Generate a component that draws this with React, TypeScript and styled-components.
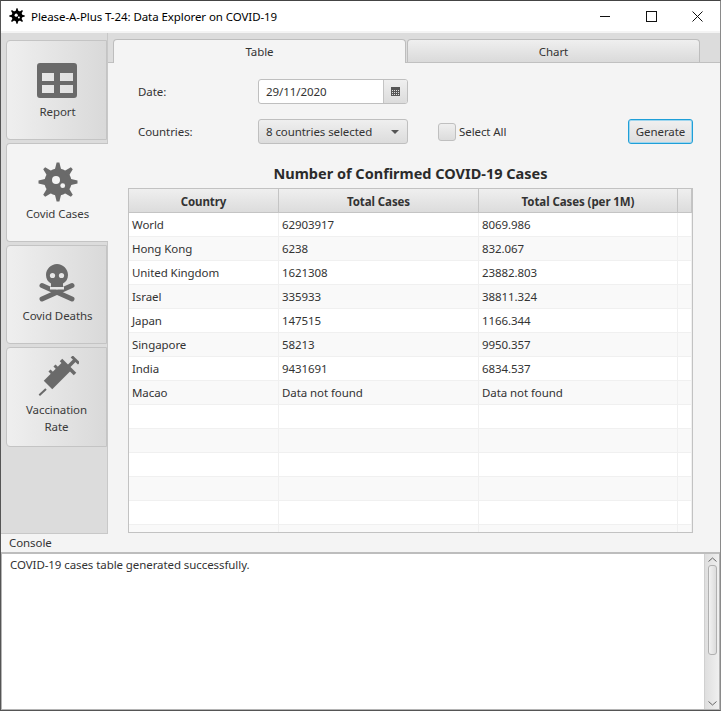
import styled, { createGlobalStyle } from "styled-components";

const GlobalStyle = createGlobalStyle`
    html, body {
        margin: 0;
        padding: 0;
        background: #f4f4f4;
    }
    * {
        box-sizing: border-box;
    }
`;

const FONT = `"Noto Sans", "Open Sans", "Liberation Sans", sans-serif`;

const Window = styled.div`
    width: 721px;
    height: 711px;
    display: flex;
    flex-direction: column;
    overflow: hidden;
    background: #f4f4f4;
    color: #333;
    font-family: ${FONT};
    font-size: 11.5px;
    letter-spacing: -0.08px;
    border: 1px solid #555;
    border-right-color: #8a8a8a;
    border-top-color: #444;
`;

const TitleBar = styled.header`
    height: 30px;
    flex: none;
    display: flex;
    align-items: center;
    padding-left: 8px;
    background: #fff;
    color: #000;
`;

const TitleText = styled.span`
    margin-left: 6px;
    flex: 1;
`;

const WindowButton = styled.span`
    width: 46px;
    height: 30px;
    display: flex;
    align-items: center;
    justify-content: center;
`;

const Body = styled.div`
    flex: 1;
    min-height: 0;
    display: flex;
    margin-top: 2px;
`;

const Sidebar = styled.nav`
    width: 107px;
    flex: none;
    display: flex;
    flex-direction: column;
    gap: 3px;
    padding: 7px 0 0 5px;
    background: #dcdcdc;
    border-right: 1px solid #c8c8c8;
    border-bottom: 1px solid #c8c8c8;
`;

const SideTab = styled.div<{ $active?: boolean; $height: number; $pad: number }>`
    height: ${(p) => p.$height}px;
    flex: none;
    display: flex;
    flex-direction: column;
    align-items: center;
    border: 1px solid #c4c4c4;
    border-right: ${(p) => (p.$active ? "none" : "1px solid #c4c4c4")};
    border-radius: 4px 0 0 4px;
    background: ${(p) => (p.$active ? "#f4f4f4" : "linear-gradient(90deg, #efefef, #d9d9d9)")};
    padding-top: ${(p) => p.$pad}px;
    width: ${(p) => (p.$active ? "102px" : "101px")};
`;

const SideLabel = styled.span<{ $gap: number; $nudge?: number; $wrapped?: boolean }>`
    margin-top: ${(p) => p.$gap}px;
    margin-left: ${(p) => (p.$nudge ?? 0) * 2}px;
    text-align: center;
    line-height: ${(p) => (p.$wrapped ? "17px" : "16px")};
    color: #3a3a3a;
    white-space: pre-line;
`;

const Main = styled.main`
    flex: 1;
    min-width: 0;
    display: flex;
    flex-direction: column;
`;

const TabHeader = styled.div`
    height: 30px;
    flex: none;
    display: flex;
    gap: 1px;
    padding: 6px 20px 0 5px;
    background: #dcdcdc;
    border-bottom: 1px solid #c0c0c0;
`;

const TopTab = styled.div<{ $active?: boolean }>`
    width: 293px;
    height: ${(p) => (p.$active ? "24px" : "23px")};
    display: flex;
    align-items: center;
    justify-content: center;
    border: 1px solid #bdbdbd;
    border-bottom: none;
    border-radius: 4px 4px 0 0;
    background: ${(p) => (p.$active ? "#f4f4f4" : "linear-gradient(#efefef, #dadada)")};
    z-index: 1;
`;

const Content = styled.section`
    flex: 1;
    min-height: 0;
    display: flex;
    flex-direction: column;
    padding: 16px 27px 1px 20px;
`;

const FormRow = styled.div`
    height: 25px;
    flex: none;
    display: flex;
    align-items: center;
    padding-left: 10px;
    margin-bottom: 15px;
`;

const FieldLabel = styled.label`
    width: 120px;
    flex: none;
`;

const DatePicker = styled.div`
    width: 150px;
    height: 25px;
    display: flex;
    border: 1px solid #bfbfbf;
    border-radius: 3px;
    background: #fff;
    overflow: hidden;
`;

const DateValue = styled.span`
    flex: 1;
    padding-left: 7px;
    line-height: 23px;
`;

const CalendarButton = styled.span`
    width: 24px;
    display: flex;
    align-items: center;
    justify-content: center;
    border-left: 1px solid #c4c4c4;
    background: linear-gradient(#efefef, #dcdcdc);
`;

const Combo = styled.div`
    width: 150px;
    height: 25px;
    display: flex;
    align-items: center;
    justify-content: space-between;
    padding: 0 8px 0 7px;
    border: 1px solid #bfbfbf;
    border-radius: 3px;
    background: linear-gradient(#efefef, #dcdcdc);
`;

const Arrow = styled.span`
    width: 0;
    height: 0;
    border-left: 4px solid transparent;
    border-right: 4px solid transparent;
    border-top: 4px solid #555;
`;

const CheckBox = styled.span`
    width: 18px;
    height: 18px;
    margin-left: 30px;
    border: 1px solid #bfbfbf;
    border-radius: 3px;
    background: linear-gradient(#efefef, #dcdcdc);
`;

const CheckLabel = styled.span`
    margin-left: 3px;
`;

const GenerateButton = styled.button`
    width: 65px;
    height: 25px;
    margin-left: auto;
    padding: 0;
    font: inherit;
    letter-spacing: inherit;
    color: #333;
    border: 1px solid #1f9fd8;
    border-radius: 3px;
    background: linear-gradient(#f0f0f0, #dedede);
    box-shadow: 0 0 0 1px #9fd6ee inset;
`;

const TableTitle = styled.h2`
    height: 22px;
    flex: none;
    margin: 3px 0 4px;
    text-align: center;
    font-size: 14.5px;
    line-height: 22px;
    font-weight: 700;
    letter-spacing: 0;
    color: #2b2b2b;
`;

const Table = styled.div`
    flex: 1;
    min-height: 0;
    overflow: hidden;
    border: 1px solid #c2c2c2;
    background: #fff;
`;

const Row = styled.div<{ $alt?: boolean }>`
    height: 24px;
    display: grid;
    grid-template-columns: 150px 200px 199px 14px;
    background: ${(p) => (p.$alt ? "#f9f9f9" : "#fff")};
    border-bottom: 1px solid #f0f0f0;
`;

const Cell = styled.div`
    padding-left: 3px;
    line-height: 23px;
    border-right: 1px solid #f0f0f0;
    white-space: nowrap;
`;

const HeaderRow = styled(Row)`
    background: linear-gradient(#efefef, #dcdcdc);
    border-bottom: 1px solid #c4c4c4;
`;

const HeaderCell = styled.div`
    text-align: center;
    font-weight: 700;
    line-height: 25px;
    border-right: 1px solid #c4c4c4;
    color: #333;
`;

const ConsoleLabel = styled.div`
    height: 18px;
    flex: none;
    padding-left: 8px;
    line-height: 18px;
`;

const ConsoleBox = styled.div`
    height: 158px;
    flex: none;
    display: flex;
    border: 1px solid #b4b4b4;
    border-top: 2px solid #bdbdbd;
    background: #fff;
`;

const ConsoleText = styled.div`
    flex: 1;
    padding: 3px 8px;
    line-height: 16px;
`;

const ScrollBar = styled.div`
    width: 15px;
    flex: none;
    display: flex;
    flex-direction: column;
    align-items: center;
    border-left: 1px solid #d0d0d0;
    background: linear-gradient(90deg, #dedede, #f0f0f0);
`;

const ScrollArrow = styled.span`
    height: 11px;
    flex: none;
    display: flex;
    align-items: center;
    justify-content: center;
`;

const ScrollThumb = styled.span`
    width: 9px;
    height: 90px;
    flex: none;
    border: 1px solid #b0b0b0;
    border-radius: 3px;
    background: linear-gradient(90deg, #f2f2f2, #dcdcdc);
`;

const ScrollSpacer = styled.span`
    flex: 1;
`;

const ICON = "#6a6a6a";

const Gear = ({ size, color, bg }: { size: number; color: string; bg: string }) => (
    <svg width={size} height={size} viewBox="0 0 40 40">
        <circle cx="20" cy="20" r="13.5" fill={color} />
        {[0, 45, 90, 135, 180, 225, 270, 315].map((a) => (
            <polygon key={a} points="16.5,9 18.6,0.5 21.4,0.5 23.5,9" fill={color} transform={`rotate(${a} 20 20)`} />
        ))}
        <circle cx="18" cy="18" r="4" fill={bg} />
        <circle cx="24.7" cy="23.7" r="2.4" fill={bg} />
    </svg>
);

const ReportIcon = () => (
    <svg width="40" height="35" viewBox="0 0 40 35">
        <path
            fillRule="evenodd"
            fill={ICON}
            d="M3 0H37A3 3 0 0 1 40 3V32A3 3 0 0 1 37 35H3A3 3 0 0 1 0 32V3A3 3 0 0 1 3 0ZM5 10V18H17V10ZM23 10V18H36V10ZM5 22V30H17V22ZM23 22V30H36V22Z"
        />
    </svg>
);

const SkullIcon = () => (
    <svg width="36" height="38" viewBox="0 0 36 38">
        <line x1="3" y1="21.5" x2="33" y2="35" stroke={ICON} strokeWidth="5" strokeLinecap="round" />
        <line x1="33" y1="21.5" x2="3" y2="35" stroke={ICON} strokeWidth="5" strokeLinecap="round" />
        <path fill="#e6e6e6" d="M11 23H25V25.5H11Z" />
        <path fill={ICON} d="M18 0C24 0 29 5 29 11C29 15 27 18 24 19.5V23H12V19.5C9 18 7 15 7 11C7 5 12 0 18 0Z" />
        <circle cx="13.5" cy="11.5" r="2.6" fill="#e6e6e6" />
        <circle cx="22.5" cy="11.5" r="2.6" fill="#e6e6e6" />
    </svg>
);

const SyringeIcon = () => (
    <svg width="44" height="40" viewBox="0 0 44 40">
        <line x1="4.3" y1="39.3" x2="11" y2="33" stroke={ICON} strokeWidth="2" />
        <line x1="13" y1="29" x2="32" y2="10" stroke={ICON} strokeWidth="12" />
        <line x1="19" y1="19" x2="14.5" y2="14.5" stroke={ICON} strokeWidth="3" />
        <line x1="24" y1="14" x2="19.5" y2="9.5" stroke={ICON} strokeWidth="3" />
        <line x1="26" y1="4" x2="40" y2="18" stroke={ICON} strokeWidth="3.5" />
        <line x1="33" y1="11" x2="40" y2="4" stroke={ICON} strokeWidth="3.5" />
        <line x1="36.7" y1="0.5" x2="44" y2="7.5" stroke={ICON} strokeWidth="3" />
    </svg>
);

const CalendarIcon = () => (
    <svg width="9" height="9" viewBox="0 0 9 9">
        <rect width="9" height="9" fill="#555" />
        <path d="M1 3H2V4H1ZM3 3H4V4H3ZM5 3H6V4H5ZM7 3H8V4H7ZM1 5H2V6H1ZM3 5H4V6H3ZM5 5H6V6H5ZM7 5H8V6H7ZM1 7H2V8H1ZM3 7H4V8H3ZM5 7H6V8H5ZM7 7H8V8H7Z" fill="#ddd" />
    </svg>
);

const MinimizeIcon = () => (
    <svg width="10" height="10" viewBox="0 0 10 10">
        <line x1="0" y1="5.5" x2="10" y2="5.5" stroke="#111" />
    </svg>
);

const MaximizeIcon = () => (
    <svg width="11" height="11" viewBox="0 0 11 11">
        <rect x="0.5" y="0.5" width="10" height="10" fill="none" stroke="#111" />
    </svg>
);

const CloseIcon = () => (
    <svg width="11" height="11" viewBox="0 0 11 11">
        <path d="M0.5 0.5L10.5 10.5M10.5 0.5L0.5 10.5" stroke="#111" fill="none" />
    </svg>
);

const Chevron = ({ down }: { down?: boolean }) => (
    <svg width="9" height="5" viewBox="0 0 9 5">
        <path d={down ? "M0.5 0.5L4.5 4L8.5 0.5" : "M0.5 4.5L4.5 1L8.5 4.5"} stroke="#666" fill="none" />
    </svg>
);

const rows: string[][] = [
    ["World", "62903917", "8069.986"],
    ["Hong Kong", "6238", "832.067"],
    ["United Kingdom", "1621308", "23882.803"],
    ["Israel", "335933", "38811.324"],
    ["Japan", "147515", "1166.344"],
    ["Singapore", "58213", "9950.357"],
    ["India", "9431691", "6834.537"],
    ["Macao", "Data not found", "Data not found"],
    ["", "", ""],
    ["", "", ""],
    ["", "", ""],
    ["", "", ""],
    ["", "", ""],
    ["", "", ""],
];

const App = () => {
    return (
        <>
            <GlobalStyle />
            <Window>
                <TitleBar>
                    <Gear size={16} color="#000" bg="#fff" />
                    <TitleText>Please-A-Plus T-24: Data Explorer on COVID-19</TitleText>
                    <WindowButton><MinimizeIcon /></WindowButton>
                    <WindowButton><MaximizeIcon /></WindowButton>
                    <WindowButton><CloseIcon /></WindowButton>
                </TitleBar>
                <Body>
                    <Sidebar>
                        <SideTab $height={100} $pad={22}>
                            <ReportIcon />
                            <SideLabel $gap={6} $nudge={1}>Report</SideLabel>
                        </SideTab>
                        <SideTab $height={99} $pad={18} $active>
                            <Gear size={40} color={ICON} bg="#f4f4f4" />
                            <SideLabel $gap={4}>Covid Cases</SideLabel>
                        </SideTab>
                        <SideTab $height={99} $pad={18}>
                            <SkullIcon />
                            <SideLabel $gap={6} $nudge={1}>Covid Deaths</SideLabel>
                        </SideTab>
                        <SideTab $height={100} $pad={8}>
                            <SyringeIcon />
                            <SideLabel $gap={5} $wrapped>{"Vaccination\nRate"}</SideLabel>
                        </SideTab>
                    </Sidebar>
                    <Main>
                        <TabHeader>
                            <TopTab $active>Table</TopTab>
                            <TopTab>Chart</TopTab>
                        </TabHeader>
                        <Content>
                            <FormRow>
                                <FieldLabel>Date:</FieldLabel>
                                <DatePicker>
                                    <DateValue>29/11/2020</DateValue>
                                    <CalendarButton><CalendarIcon /></CalendarButton>
                                </DatePicker>
                            </FormRow>
                            <FormRow>
                                <FieldLabel>Countries:</FieldLabel>
                                <Combo>
                                    8 countries selected
                                    <Arrow />
                                </Combo>
                                <CheckBox />
                                <CheckLabel>Select All</CheckLabel>
                                <GenerateButton>Generate</GenerateButton>
                            </FormRow>
                            <TableTitle>Number of Confirmed COVID-19 Cases</TableTitle>
                            <Table>
                                <HeaderRow>
                                    <HeaderCell>Country</HeaderCell>
                                    <HeaderCell>Total Cases</HeaderCell>
                                    <HeaderCell>Total Cases (per 1M)</HeaderCell>
                                    <HeaderCell />
                                </HeaderRow>
                                {rows.map((row, i) => (
                                    <Row key={i} $alt={i % 2 === 1}>
                                        <Cell>{row[0]}</Cell>
                                        <Cell>{row[1]}</Cell>
                                        <Cell>{row[2]}</Cell>
                                        <Cell />
                                    </Row>
                                ))}
                            </Table>
                        </Content>
                    </Main>
                </Body>
                <ConsoleLabel>Console</ConsoleLabel>
                <ConsoleBox>
                    <ConsoleText>COVID-19 cases table generated successfully.</ConsoleText>
                    <ScrollBar>
                        <ScrollArrow><Chevron /></ScrollArrow>
                        <ScrollThumb />
                        <ScrollSpacer />
                        <ScrollArrow><Chevron down /></ScrollArrow>
                    </ScrollBar>
                </ConsoleBox>
            </Window>
        </>
    );
};

export default App;
